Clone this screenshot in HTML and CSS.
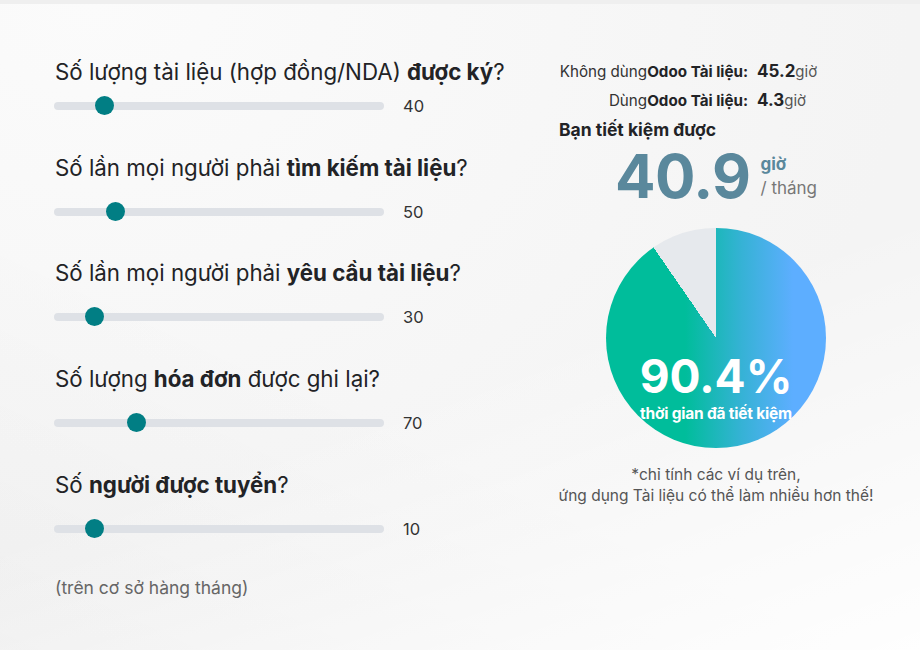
FILE: index.html
```html
<!DOCTYPE html>
<html lang="vi">
<head>
<meta charset="utf-8">
<title>Odoo Tài liệu</title>
<link rel="stylesheet" href="styles.css">
</head>
<body>
<div class="topband"></div>
<main class="page">
  <section class="inputs">
    <div class="field field-first">
      <div class="question">Số lượng tài liệu (hợp đồng/NDA) <b>được ký</b>?</div>
      <div class="slider-row">
        <div class="track"><span class="thumb" style="left:41px"></span></div>
        <span class="value">40</span>
      </div>
    </div>
    <div class="field">
      <div class="question">Số lần mọi người phải <b>tìm kiếm tài liệu</b>?</div>
      <div class="slider-row">
        <div class="track"><span class="thumb" style="left:52px"></span></div>
        <span class="value">50</span>
      </div>
    </div>
    <div class="field">
      <div class="question">Số lần mọi người phải <b>yêu cầu tài liệu</b>?</div>
      <div class="slider-row">
        <div class="track"><span class="thumb" style="left:31px"></span></div>
        <span class="value">30</span>
      </div>
    </div>
    <div class="field">
      <div class="question">Số lượng <b>hóa đơn</b> được ghi lại?</div>
      <div class="slider-row">
        <div class="track"><span class="thumb" style="left:73px"></span></div>
        <span class="value">70</span>
      </div>
    </div>
    <div class="field">
      <div class="question">Số <b>người được tuyển</b>?</div>
      <div class="slider-row">
        <div class="track"><span class="thumb" style="left:31px"></span></div>
        <span class="value">10</span>
      </div>
    </div>
    <p class="note">(trên cơ sở hàng tháng)</p>
  </section>

  <section class="results">
    <div class="stats">
      <span class="stat-label">Không dùng<b>Odoo Tài liệu:</b></span>
      <span class="stat-value"><b>45.2</b>giờ</span>
      <span class="stat-label">Dùng<b>Odoo Tài liệu:</b></span>
      <span class="stat-value"><b>4.3</b>giờ</span>
    </div>
    <div class="saved-title">Bạn tiết kiệm được</div>
    <div class="big">
      <span class="big-num">40.9</span>
      <span class="big-unit">
        <span class="unit-h">giờ</span>
        <span class="unit-m">/ tháng</span>
      </span>
    </div>
    <div class="pie">
      <span class="pie-pct">90.4%</span>
      <span class="pie-label">thời gian đã tiết kiệm</span>
    </div>
    <p class="footnote">*chỉ tính các ví dụ trên,<br>ứng dụng Tài liệu có thể làm nhiều hơn thế!</p>
  </section>
</main>
</body>
</html>
```
FILE: styles.css
```css
* { box-sizing: border-box; }

html, body {
  margin: 0;
  height: 100%;
}

body {
  font-family: Inter, "Noto Sans", "DejaVu Sans", sans-serif;
  color: #222326;
  background:
    linear-gradient(160deg, rgba(255,255,255,0) 55%, rgba(255,255,255,0.9) 100%),
    linear-gradient(25deg, rgba(0,0,0,0.025) 0%, rgba(0,0,0,0) 40%),
    radial-gradient(ellipse at 10% 0%, #fbfbfb 0%, #f4f4f4 70%);
  overflow: hidden;
}

.topband {
  height: 4px;
  background: #efefef;
}

.page {
  display: flex;
  padding-top: 56px;
}

/* left column */
.inputs {
  width: 540px;
  padding-left: 54px;
}

.field {
  margin-bottom: 39.65px;
}

.question {
  font-size: 22.3px;
  line-height: 24px;
  padding-left: 1px;
  color: #222326;
  white-space: nowrap;
}

.question b {
  font-weight: 700;
}

.slider-row {
  display: flex;
  align-items: center;
  height: 20px;
  margin-top: 22px;
}

.field-first .slider-row {
  margin-top: 12px;
}

.track {
  position: relative;
  width: 330px;
  height: 8px;
  border-radius: 4px;
  background: #dee1e6;
}

.thumb {
  position: absolute;
  top: -6px;
  width: 19px;
  height: 19px;
  border-radius: 50%;
  background: #017e84;
}

.value {
  margin-left: 19px;
  font-size: 16.5px;
  color: #333;
}

.note {
  margin: 2px 0 0;
  font-size: 17.5px;
  line-height: 20px;
  color: #666;
  padding-left: 1px;
}

/* right column */
.results {
  width: 352px;
  display: flex;
  flex-direction: column;
}

.stats {
  display: grid;
  grid-template-columns: 208px auto;
  column-gap: 9px;
  row-gap: 6px;
  align-items: center;
}

.stat-label {
  text-align: right;
  font-size: 15.2px;
  line-height: 22px;
  color: #333;
  white-space: nowrap;
}

.stat-label b {
  color: #222326;
}

.stat-value {
  font-size: 15px;
  line-height: 22px;
  color: #555;
}

.stat-value b {
  font-size: 17px;
  color: #222326;
}

.saved-title {
  margin-top: 7px;
  padding-left: 19px;
  font-size: 17.5px;
  line-height: 22px;
  font-weight: 700;
  color: #222326;
}

.big {
  display: flex;
  justify-content: center;
  align-items: center;
  gap: 10px;
  margin-top: 9px;
  color: #5a889c;
}

.big-num {
  font-size: 60px;
  line-height: 52px;
  font-weight: 700;
  letter-spacing: -0.5px;
}

.big-unit {
  display: flex;
  flex-direction: column;
  line-height: 24px;
}

.unit-h {
  font-size: 17px;
  font-weight: 700;
  color: #5a889c;
}

.unit-m {
  font-size: 17px;
  color: #777;
}

.pie {
  align-self: center;
  margin-top: 26px;
  width: 220px;
  height: 220px;
  border-radius: 50%;
  background:
    conic-gradient(rgba(0,0,0,0) 0deg 325.4deg, #e6e9ed 325.4deg 360deg),
    linear-gradient(90deg, #00bd9b 0%, #00bd9b 36%, #36b2d6 62%, #5daeff 85%, #5daeff 100%);
  display: flex;
  flex-direction: column;
  align-items: center;
  padding-top: 124px;
  color: #fff;
}

.pie-pct {
  font-size: 46px;
  line-height: 48px;
  font-weight: 700;
}

.pie-label {
  margin-top: 5px;
  font-size: 15.5px;
  line-height: 18px;
  font-weight: 700;
  white-space: nowrap;
  letter-spacing: -0.2px;
}

.footnote {
  margin: 16px 0 0;
  text-align: center;
  font-size: 15.5px;
  line-height: 21px;
  color: #555;
}
```
